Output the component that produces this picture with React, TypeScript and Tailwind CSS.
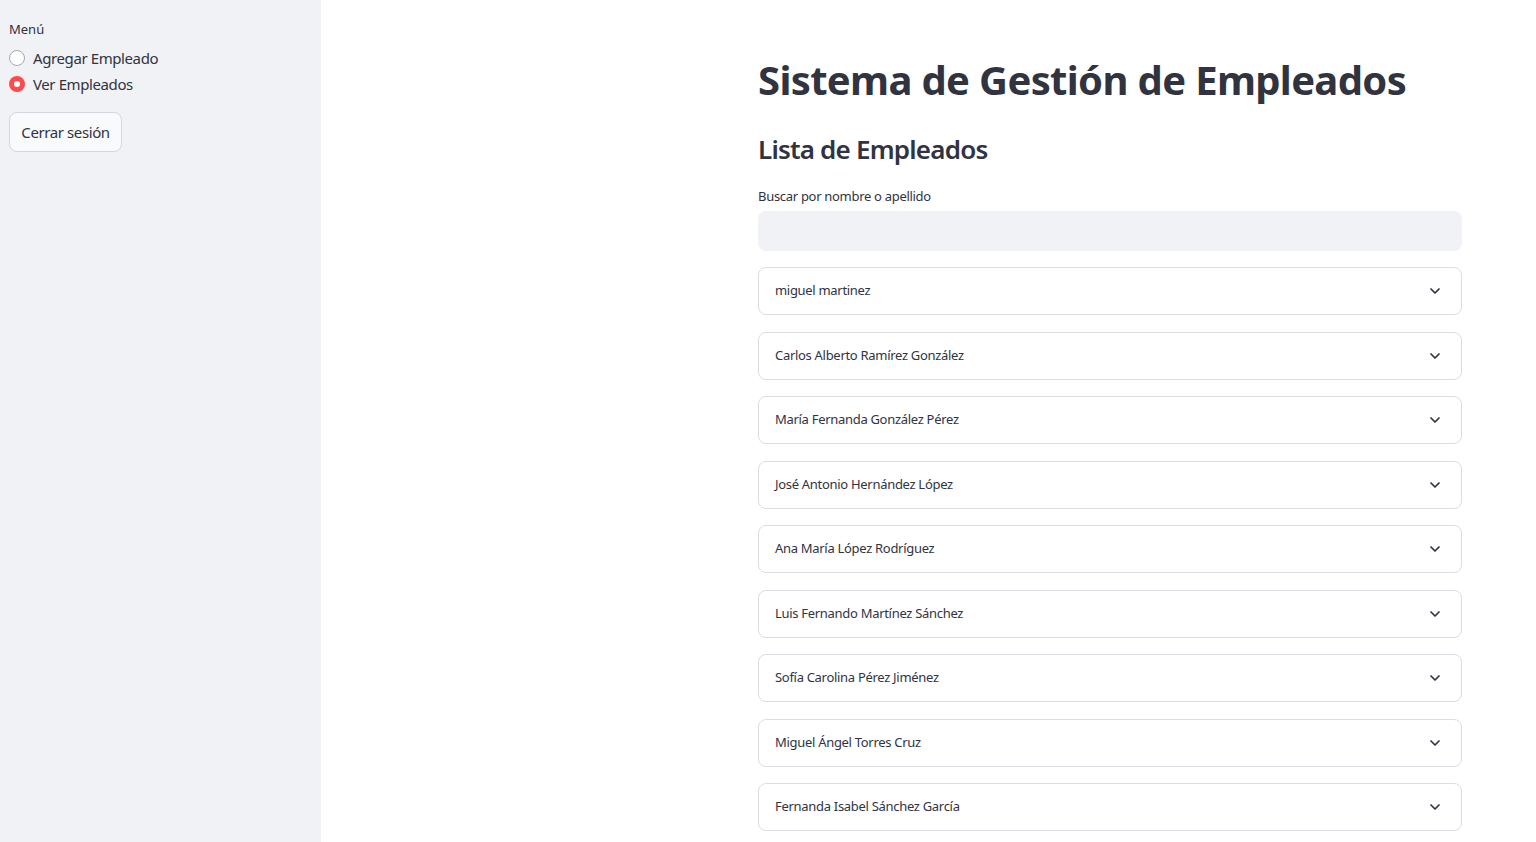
import React from "react";

const names = [
  "miguel martinez",
  "Carlos Alberto Ramírez González",
  "María Fernanda González Pérez",
  "José Antonio Hernández López",
  "Ana María López Rodríguez",
  "Luis Fernando Martínez Sánchez",
  "Sofía Carolina Pérez Jiménez",
  "Miguel Ángel Torres Cruz",
  "Fernanda Isabel Sánchez García",
];

function Chevron() {
  return (
    <svg width="16" height="16" viewBox="0 0 24 24" fill="none" stroke="#31333f" strokeWidth="2.6" strokeLinecap="round" strokeLinejoin="round">
      <path d="M6 9l6 6 6-6" />
    </svg>
  );
}

export default function App() {
  return (
    <div className="flex w-full h-[842px] overflow-hidden bg-white text-[#31333f]" style={{ fontFamily: '"Noto Sans", "Open Sans", sans-serif' }}>
      <aside className="w-[321px] shrink-0 bg-[#f0f2f6] px-[9px] pt-[20px]">
        <div className="text-[13px] leading-[18px] mb-[10px]">Menú</div>
        <div className="flex flex-col gap-[6px]">
          <label className="flex items-center gap-[8px] h-[20px]">
            <span className="w-[16px] h-[16px] rounded-full border border-[#a3a8b4] bg-white" />
            <span className="text-[15px] tracking-[-0.4px]">Agregar Empleado</span>
          </label>
          <label className="flex items-center gap-[8px] h-[20px]">
            <span className="w-[16px] h-[16px] rounded-full bg-[#ff4b4b] flex items-center justify-center">
              <span className="w-[6px] h-[6px] rounded-full bg-white" />
            </span>
            <span className="text-[15px] tracking-[-0.4px]">Ver Empleados</span>
          </label>
        </div>
        <button className="mt-[18px] h-[40px] w-[113px] rounded-[8px] border border-[#d5d7de] bg-[#f9fafb] text-[15px] tracking-[-0.4px]">
          Cerrar sesión
        </button>
      </aside>
      <main className="flex-1 pl-[437px] pr-[74px] pt-[52px]">
        <h1 className="text-[40px] font-bold leading-[56px] tracking-[-0.65px]">Sistema de Gestión de Empleados</h1>
        <h2 className="mt-[23px] text-[26px] font-semibold leading-[36px] tracking-[-0.8px]">Lista de Empleados</h2>
        <div className="mt-[20px] text-[13px] leading-[18px] tracking-[-0.3px]">Buscar por nombre o apellido</div>
        <div className="mt-[6px] h-[40px] rounded-[8px] bg-[#f0f2f6]" />
        <div className="mt-[16px] flex flex-col gap-[16.5px]">
          {names.map((n) => (
            <div key={n} className="h-[48px] rounded-[8px] border border-[#dcdde2] flex items-center justify-between pl-[16px] pr-[18px]">
              <span className="text-[13px] tracking-[-0.3px]">{n}</span>
              <Chevron />
            </div>
          ))}
        </div>
      </main>
    </div>
  );
}
